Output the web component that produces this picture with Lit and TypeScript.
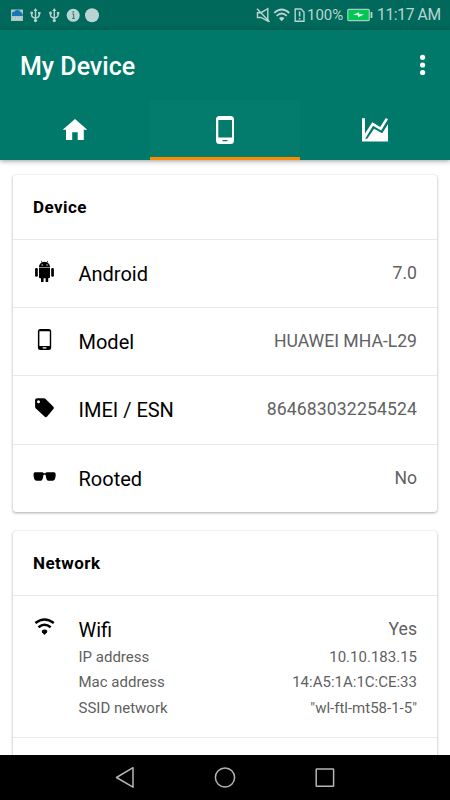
import { LitElement, html, css, svg } from "lit";
import { customElement, property } from "lit/decorators.js";

const icons: Record<string, unknown> = {
  android: svg`<path d="M6 7.2C6 4.8 7.2 3.2 8.8 2.5L7.8 1.1L8.2 .7L9.5 2.2Q11.5 1.5 13.5 2.2L14.8 .7L15.2 1.1L14.2 2.5C15.9 3.2 17 4.8 17 7.2Z"/><path d="M6 7.8H17V17.2Q17 18.3 15.7 18.3H15.2V22H12.6V18.3H10.6V22H8V18.3H7.3Q6 18.3 6 17.2Z"/><rect x="2.1" y="8" width="2.7" height="8.8" rx="1.2"/><rect x="18.2" y="8" width="2.7" height="8.8" rx="1.2"/><circle cx="9.1" cy="5" r=".65" fill="#fff"/><circle cx="14" cy="5" r=".65" fill="#fff"/>`,
  phone: svg`<path fill-rule="evenodd" d="M7.4 1H15.6Q18.2 1 18.2 3.5V19.5Q18.2 22 15.6 22H7.4Q4.9 22 4.9 19.5V3.5Q4.9 1 7.4 1ZM6.4 3.3V17.9H16.8V3.3ZM9.6 19.2V20.5H13.4V19.2Z"/>`,
  tag: svg`<path fill-rule="evenodd" d="M4 2.2H10.8Q11.8 2.2 12.6 3L20.4 10.7Q21.4 12 20.4 13.1L14.1 20.5Q12.8 21.8 11.5 20.6L2.9 12.6Q2.1 11.8 2.1 10.8V4Q2.1 2.2 4 2.2ZM5.5 4.2A1.5 1.5 0 1 0 5.5 7.2A1.5 1.5 0 1 0 5.5 4.2Z"/>`,
  glasses: svg`<path d="M2 7.3H9Q10.3 7.3 10.8 8.2H12.3Q12.8 7.3 14 7.3H21Q22.6 7.3 22.7 9.3V10Q22.5 15.6 19.8 15.8H15.5Q13.2 15.6 12.6 9.7H10.5Q9.9 15.6 7.6 15.8H3.4Q.8 15.6 .5 10V9.3Q.5 7.3 2 7.3Z"/>`,
  wifi: svg`<g fill="none" stroke="#000" stroke-width="2.5"><path d="M2.4 7Q11.5-.1 20.8 7"/><path d="M5.5 11.2Q11.5 6.4 17.7 11.2"/></g><path d="M8.7 14.8Q11.5 12.3 14.4 14.8L14 16.2L11.5 19L9 16.2Z"/>`,
};

@customElement("info-row")
class InfoRow extends LitElement {
  @property() icon = "";
  @property() label = "";
  @property() value = "";
  @property({ attribute: false }) details: string[][] = [];
  static styles = css`
    :host { display: block; box-sizing: border-box; height: 68.35px; padding: 20px 20px 0; border-top: 1.3px solid #e9e9e9; }
    :host([tall]) { height: 142.4px; }
    .main { display: flex; height: 28px; }
    .icon { width: 24px; height: 24px; flex: none; }
    .label { margin-left: 21.5px; flex: 1; font-size: 20px; line-height: 28px; color: #000; }
    .value { font-size: 17.6px; line-height: 26px; color: #616161; }
    :host([numeric]) .value { letter-spacing: .13px; }
    .details { padding: 1px 0 0 45.5px; }
    .detail { display: flex; justify-content: space-between; font-size: 15px; line-height: 25.5px; color: #5f5f5f; }
  `;
  render() {
    return html`<div class="main"><svg class="icon" viewBox="0 0 24 24">${icons[this.icon]}</svg><span class="label">${this.label}</span><span class="value">${this.value}</span></div>
      <div class="details">${this.details.map(([k, v]) => html`<div class="detail"><span>${k}</span><span>${v}</span></div>`)}</div>`;
  }
}

@customElement("app-root")
class AppRoot extends LitElement {
  static styles = css`
    :host { display: flex; flex-direction: column; width: 450px; height: 800px; overflow: hidden; background: #fff; font-family: Roboto, sans-serif; }
    svg { display: block; flex: none; }
    .status { height: 30px; flex: none; display: flex; align-items: center; background: #00695b; color: #b8d5d1; }
    .left { width: 250px; }
    .clock { font-size: 15.6px; letter-spacing: -.35px; line-height: 32px; white-space: nowrap; margin-left: 4px; }
    .percent { font-size: 15px; line-height: 30px; width: 40px; white-space: nowrap; }
    .head { height: 130px; flex: none; background: #00796b; box-shadow: 0 1px 5px rgba(0,0,0,.4); z-index: 1; }
    .bar { height: 70px; display: flex; align-items: center; justify-content: space-between; padding: 0 24px 0 20px; }
    h1 { margin: 4px 0 0; font-size: 25px; line-height: 30px; font-weight: 500; color: #fff; }
    .tabs { height: 60px; display: grid; grid-template-columns: repeat(3, 150px); }
    .tab { box-sizing: border-box; height: 60px; display: flex; justify-content: center; padding-top: 14px; border-bottom: 3px solid transparent; }
    .active { border-color: #fb8c00; background: #047c6d; }
    .content { flex: 1; min-height: 0; overflow: hidden; padding: 14.5px 13px 0; }
    .card { border-radius: 3px; box-shadow: 0 1px 3px rgba(0,0,0,.32), 0 0 1px rgba(0,0,0,.15); background: #fff; margin-bottom: 19px; }
    h2 { margin: 0; box-sizing: border-box; height: 64px; padding: 0 20px; font-size: 17px; letter-spacing: .45px; line-height: 64px; font-weight: 700; color: #000; }
    .next { height: 70px; border-top: 1.3px solid #e9e9e9; }
    .nav { flex: none; height: 45px; background: #000; }
  `;
  render() {
    return html`
      <div class="status">
        <svg class="left" width="250" height="30" viewBox="0 0 250 30">
          <path d="M11 9.5H23V21H11Z" fill="#a9c7c5"/><path d="M12 16V13Q12.5 11.4 14.5 11.5Q16 9.4 18.5 10.3Q20 10 20.5 12Q23 12.5 22.8 16Z" fill="#1976b5"/><path d="M14 17V20M17 17V20M20 17V20" stroke="#c9ddda"/>
          ${[35.5, 54.3].map((x) => svg`<g transform="translate(${x} 0)" fill="none" stroke="#b8d5d1" stroke-width="1.4"><path d="M0 10V20M-3.8 13V15.5Q-3.8 17 0 18.4Q3.8 17 3.8 15V13"/><path d="M0 8L2 11H-2Z" fill="#b8d5d1" stroke="none"/><circle cx="0" cy="20.6" r="1.6" fill="#b8d5d1" stroke="none"/><circle cx="-3.8" cy="13" r="1.4" fill="#b8d5d1" stroke="none"/><rect x="2.6" y="12" width="2.4" height="2.3" fill="#b8d5d1" stroke="none"/></g>`)}
          <circle cx="73.2" cy="15.3" r="6.5" fill="#b8d5d1"/><path d="M72.2 14H73.6V18.5M72 18.5H75" stroke="#3d8379" stroke-width="1.2" fill="none"/><circle cx="73.3" cy="11.9" r=".9" fill="#3d8379"/>
          <circle cx="92" cy="15.2" r="7" fill="#b8d5d1"/>
        </svg>
        <svg width="57" height="30" viewBox="250 0 57 30" fill="none" stroke="#b8d5d1" stroke-width="1.4">
          <path d="M257.5 12.7H261L267.8 8.7V21L261 17.5H257.5ZM257 8.7L269.5 21.7"/>
          <path d="M274.2 13Q281.7 6 289.3 13M276.6 15.8Q281.7 11.2 286.8 15.8" stroke-width="1.7"/><path d="M279 18.2Q281.7 15.9 284.4 18.2L281.7 21.2Z" fill="#b8d5d1" stroke="none"/>
          <path d="M295.2 9H301L304 12V21.2H295.2Z"/><path d="M299.6 11.5V16.5M299.6 18V19.5" stroke-width="1.6"/>
        </svg>
        <span class="percent">100%</span>
        <svg width="26" height="30" viewBox="347 0 26 30"><rect x="347.8" y="9.4" width="21.5" height="11.2" rx="1" fill="#00c853" stroke="#a7ccc8" stroke-width="1.2"/><path d="M371.5 12V18" stroke="#b8d5d1" stroke-width="1.8"/><path d="M353 14.7L359 12.2L359.2 14.1L364 14.4L358.2 17.2L357.8 15.3Z" fill="#e0fff0"/></svg>
        <span class="clock">11:17 AM</span>
      </div>
      <div class="head">
        <div class="bar"><h1>My Device</h1><svg width="6" height="22" viewBox="0 0 6 22" fill="#fff"><circle cx="2.6" cy="3.3" r="2.6"/><circle cx="2.6" cy="11" r="2.6"/><circle cx="2.6" cy="18.5" r="2.6"/></svg></div>
        <div class="tabs">
          <div class="tab"><svg width="30" height="30" viewBox="0 0 30 30"><path d="M15 5L27.3 15.7H23.8V26H17.7V18.2H12.2V26H6V15.7H2.7Z" fill="#fff"/></svg></div>
          <div class="tab active"><svg width="30" height="30" viewBox="0 0 30 30"><path fill="#fff" fill-rule="evenodd" d="M9.5 2H20.5Q24 2 24 5.5V26.5Q24 30 20.5 30H9.5Q6 30 6 26.5V5.5Q6 2 9.5 2ZM8.3 6V23.4H22V6ZM12.5 26V27.2H17.5V26Z"/></svg></div>
          <div class="tab"><svg width="30" height="30" viewBox="0 0 30 30" fill="#fff"><path d="M2 4.2H5V19.6L12.3 8.3L20.2 13L25.8 4L28 5.3L21.2 16.6L13 11.8L5.2 24.8H7.2L14 14.8L22.2 19.3L28 10V27.5H2Z"/></svg></div>
        </div>
      </div>
      <div class="content">
        <div class="card"><h2>Device</h2>
          <info-row icon="android" label="Android" value="7.0"></info-row>
          <info-row icon="phone" label="Model" value="HUAWEI MHA-L29"></info-row>
          <info-row numeric icon="tag" label="IMEI / ESN" value="864683032254524"></info-row>
          <info-row icon="glasses" label="Rooted" value="No"></info-row>
        </div>
        <div class="card"><h2>Network</h2>
          <info-row tall icon="wifi" label="Wifi" value="Yes" .details=${[["IP address", "10.10.183.15"], ["Mac address", "14:A5:1A:1C:CE:33"], ["SSID network", '"wl-ftl-mt58-1-5"']]}></info-row>
          <div class="next"></div>
        </div>
      </div>
      <div class="nav"><svg width="450" height="45" viewBox="0 0 450 45" fill="none" stroke="#b5b5b5" stroke-width="1.5" stroke-linejoin="round"><path d="M116.5 22.5L133 12.7V32.2Z"/><circle cx="225" cy="22.5" r="9.6"/><rect x="316.2" y="14" width="17.4" height="17.2" rx=".5"/></svg></div>`;
  }
}
